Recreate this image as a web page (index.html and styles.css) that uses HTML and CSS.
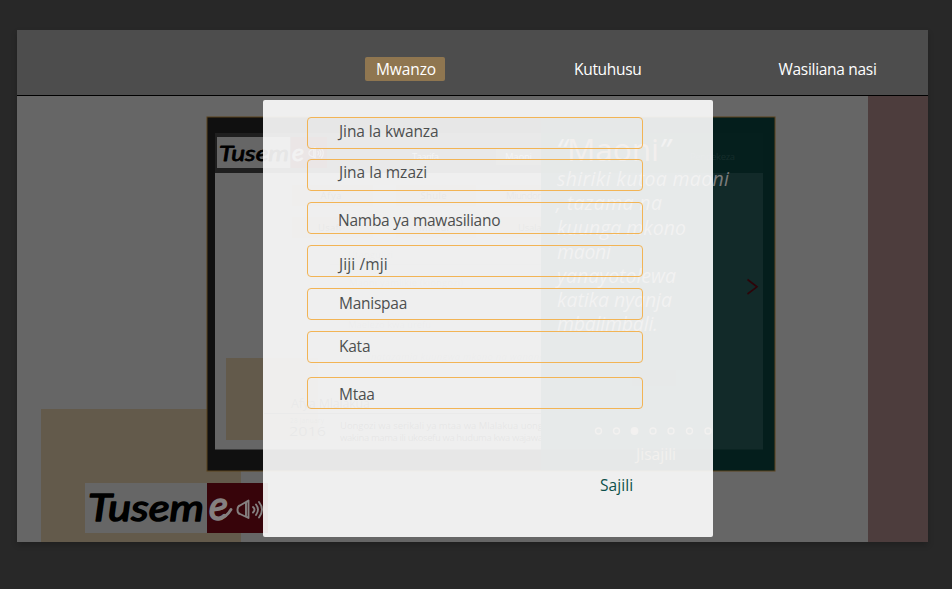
FILE: index.html
```html
<!DOCTYPE html>
<html lang="sw">
<head>
<meta charset="utf-8">
<title>Tuseme</title>
<link rel="stylesheet" href="styles.css">
</head>
<body>
<div class="app">
  <header class="topbar">
    <nav class="nav">
      <a class="nav-item active">Mwanzo</a>
      <a class="nav-item about">Kutuhusu</a>
      <a class="nav-item contact">Wasiliana nasi</a>
    </nav>
  </header>
  <main class="stage">
    <div class="sand"></div>
    <svg class="slide" width="569" height="355" viewBox="207 117 569 355">
      <defs><clipPath id="left"><rect x="207" y="117" width="334" height="355"/></clipPath></defs>
      <rect x="207" y="117" width="334" height="354" fill="#101010"/>
      <rect x="541" y="117" width="234" height="354" fill="#041e1c"/>
      <rect x="215" y="133" width="326" height="40" fill="#1f1f1f"/>
      <rect x="215" y="173" width="326" height="276.500" fill="#666"/>
      <rect x="541" y="133" width="222" height="40" fill="#051f1d"/>
      <rect x="541" y="173" width="222" height="276.500" fill="#122a29"/>
      <rect x="217" y="137" width="73.500" height="31" fill="#666"/>
      <rect x="290.500" y="137" width="36.500" height="31" fill="#37040a"/>
      <text class="logo small" x="219" y="160.500" font-size="22" textLength="70" lengthAdjust="spacingAndGlyphs">Tusem</text>
      <text class="logo light" x="292" y="160.500" font-size="24" textLength="12" lengthAdjust="spacingAndGlyphs">e</text>
      <g transform="translate(308 147) scale(.6)" class="speaker"><path d="M4 6L12 1V18L4 14.500Q1.500 14 1.500 10.500Q1.500 6.500 4 6ZM9.500 3V16M16.500 7.500Q19.500 10 16.500 13M19.500 5Q23.500 10 19.500 15.500M22.500 2.500Q28.500 10 22.500 18"/></g>
      <g clip-path="url(#left)">
        <rect x="226" y="358" width="92" height="82" fill="#635a4b"/>
        <g fill="#635a4b">
          <rect x="292" y="185" width="81" height="21"/><rect x="396" y="185" width="80" height="21"/><rect x="500" y="185" width="80" height="21"/>
          <rect x="292" y="217" width="81" height="21"/><rect x="396" y="217" width="80" height="21"/><rect x="500" y="217" width="80" height="21"/>
        </g>
        <rect x="496" y="148" width="60" height="17" fill="#3b342b"/>
        <g class="tiny" fill="#101010">
          <text x="320.500" y="199" textLength="21">Afya</text><text x="420.500" y="199" textLength="26">Shule</text><text x="506" y="199" textLength="58">Miundombinu</text>
          <text x="318" y="231" textLength="23">Usafi</text><text x="419" y="231" textLength="30">Miradi</text><text x="518" y="231" textLength="37">Usalama</text>
        </g>
        <g class="tiny" fill="#484848">
          <text x="348" y="258" textLength="45">Utangulizi</text>
          <text x="349" y="286" textLength="114">Maoni yamlikie (kiongozi)</text>
          <text x="348" y="328" textLength="83">Maelezo kwa urefu</text>
          <text x="364" y="360" font-style="italic" textLength="188">Nnatazamia kuungwa mkono na wananchi</text>
        </g>
        <path d="M330 247V264.500H560M330 305V344H560" fill="none" stroke="#5c5c5c"/>
        <g class="tiny" fill="#999"><text x="412" y="160" textLength="27">Taarifa</text><text x="505" y="160" textLength="27">Maoni</text></g>
        <text class="slide-text" x="291" y="408" font-size="12.500" fill="#202020" textLength="79">Afya Mlalakua</text>
        <path d="M264 413.500H541" stroke="#303030"/>
        <text class="slide-text" x="290" y="423" font-size="6.500" fill="#303030" textLength="34">28 January</text>
        <text class="slide-text" x="289" y="436" font-size="13.500" fill="#181818" textLength="37" lengthAdjust="spacingAndGlyphs">2016</text>
        <g class="tiny" fill="#000">
          <text x="340" y="429" textLength="218">Uongozi wa serikali ya mtaa wa Mlalakua uongeze</text>
          <text x="340" y="441" textLength="203">wakina mama ili ukosefu wa huduma kwa wajawa</text>
        </g>
      </g>
      <text class="tiny" x="690" y="160" fill="#152d2b" textLength="45">Pendekeza</text>
      <text class="slide-text" x="556" y="161" font-size="31" textLength="114" lengthAdjust="spacingAndGlyphs" fill="#836550"><tspan fill="#7b7b7b" font-style="italic">“</tspan>Maoni<tspan fill="#7b7b7b" font-style="italic">”</tspan></text>
      <g class="quote">
        <text x="557" y="186" textLength="172">shiriki kutoa maoni</text>
        <text x="556" y="210" textLength="106">, tazama na</text>
        <text x="557" y="235" textLength="129">kuunga mkono</text>
        <text x="557" y="259" textLength="54">maoni</text>
        <text x="557" y="283" textLength="119">yanayotolewa</text>
        <text x="557" y="307" textLength="115">katika nyanja</text>
        <text x="557" y="331" textLength="101">mbalimbali.</text>
      </g>
      <rect x="632" y="370" width="44" height="16" fill="#0b2423"/>
      <path d="M747.500 279.500L757 286.800L747.500 294" fill="none" stroke="#2e0409" stroke-width="1.600"/>
      <g fill="none" stroke="#807468" stroke-width="1.400">
        <circle cx="598.500" cy="431" r="3"/><circle cx="616.500" cy="431" r="3"/><circle cx="634.500" cy="431" r="3.200" fill="#8a7868"/><circle cx="653" cy="431" r="3"/><circle cx="671" cy="431" r="3"/><circle cx="689.500" cy="431" r="3"/><circle cx="708" cy="431" r="3"/>
      </g>
      <text class="slide-text" x="636" y="460" font-size="15.500" fill="#806a55" textLength="40">Jisajili</text>
      <rect x="207" y="117" width="568" height="354" fill="none" stroke="#5a421d"/>
    </svg>
    <div class="rose"></div>
    <svg class="brand" width="183" height="50" viewBox="85 483 183 50">
      <rect x="85" y="483" width="122" height="50" fill="#666"/>
      <rect x="207" y="483" width="61" height="50" fill="#37040a"/>
      <text class="logo big" x="88" y="520.500" font-size="36" textLength="116" lengthAdjust="spacingAndGlyphs">Tusem</text>
      <text class="logo light big" x="209" y="519.500" font-size="40" textLength="19" lengthAdjust="spacingAndGlyphs">e</text>
      <path d="M220 518.500Q226.500 517 231 509.500" fill="none" stroke="#858080" stroke-width="2.800" stroke-linecap="round"/>
      <g transform="translate(236 499.500)" class="speaker"><path d="M4 6L12.500 1V18.500L4 14.500Q1.500 14 1.500 10.500Q1.500 6.500 4 6ZM10 3V16M17 7.500Q20 10 17 13M20 5Q24 10 20 15.500M23 2.500Q29 10 23 18"/></g>
    </svg>
    <form class="modal">
      <div class="field f1"><span>Jina la kwanza</span></div>
      <div class="field f2"><span>Jina la mzazi</span></div>
      <div class="field f3"><span>Namba ya mawasiliano</span></div>
      <div class="field f4"><span>Jiji /mji</span></div>
      <div class="field f5"><span>Manispaa</span></div>
      <div class="field f6"><span>Kata</span></div>
      <div class="field f7"><span>Mtaa</span></div>
      <a class="submit">Sajili</a>
    </form>
  </main>
</div>
</body>
</html>
```
FILE: styles.css
```css
* { box-sizing: border-box; }
body {
  margin: 0;
  height: 589px;
  padding: 30px 24px 0 17px;
  overflow: hidden;
  background: #282828;
  font: 16px/22px "Open Sans", "Noto Sans", sans-serif;
}
.app { height: 512px; background: #666; box-shadow: 0 3px 6px rgba(0, 0, 0, .2); }
.topbar { height: 66px; background: #4d4d4d; border-bottom: 1px solid #000; }
.nav { display: flex; align-items: flex-start; padding: 27px 0 0 348px; color: #fff; font-size: 15.5px; letter-spacing: -.3px; }
.nav-item { white-space: nowrap; }
.active { width: 80px; height: 24px; padding-left: 11px; border-radius: 2px; background: #8f7650; line-height: 24px; letter-spacing: -.1px; }
.about { margin-left: 129px; line-height: 24px; }
.contact { margin-left: 137px; line-height: 25px; }
.stage { position: relative; height: 446px; display: flex; align-items: flex-end; overflow: hidden; }
.sand { width: 200px; height: 133px; margin-left: 24px; background: #635a4b; }
.rose { width: 60px; height: 446px; margin-left: auto; background: #4d3d3d; }
.slide { position: absolute; left: 190px; top: 21px; overflow: visible; }
.brand { position: absolute; left: 68px; top: 387px; }
.logo { font-family: Lato, "Open Sans", sans-serif; font-style: italic; font-weight: 400; fill: #000; stroke: #000; stroke-width: .8; stroke-linejoin: round; }
.big { stroke-width: 1.5; }
.light { fill: #858080; stroke: #858080; }
.speaker { fill: none; stroke: #858080; stroke-width: 1.9; stroke-linejoin: round; stroke-linecap: round; }
.slide-text { font-family: "Open Sans", sans-serif; }
.tiny { font-family: "Open Sans", sans-serif; font-size: 9.5px; }
.quote { font-family: "Open Sans", sans-serif; font-size: 19.5px; font-style: italic; fill: #7b7b7b; }
.modal {
  position: absolute;
  left: 246px;
  top: 4px;
  width: 450px;
  height: 437px;
  padding: 17px 70px 0 44px;
  border-radius: 2px;
  background: rgba(254, 254, 254, .907);
  color: #4d4f4f;
  font-size: 15.5px;
  letter-spacing: -.25px;
}
.field { height: 32px; padding-left: 31px; margin-bottom: 10px; border: 1px solid #f2b455; border-radius: 4px; line-height: 28px; white-space: nowrap; }
.f1 { line-height: 26px; letter-spacing: -.1px; }
.f2, .f3, .f4, .f5 { margin-bottom: 11px; }
.f2 { line-height: 25px; letter-spacing: 0; }
.f3 { padding-left: 30px; line-height: 35px; }
.f4 { line-height: 36px; letter-spacing: .1px; }
.f6 { margin-bottom: 14px; }
.f7 { line-height: 32px; }
.submit { display: block; margin: 66px 0 0 293px; color: #0d4f4a; line-height: 20px; letter-spacing: .1px; }
```
